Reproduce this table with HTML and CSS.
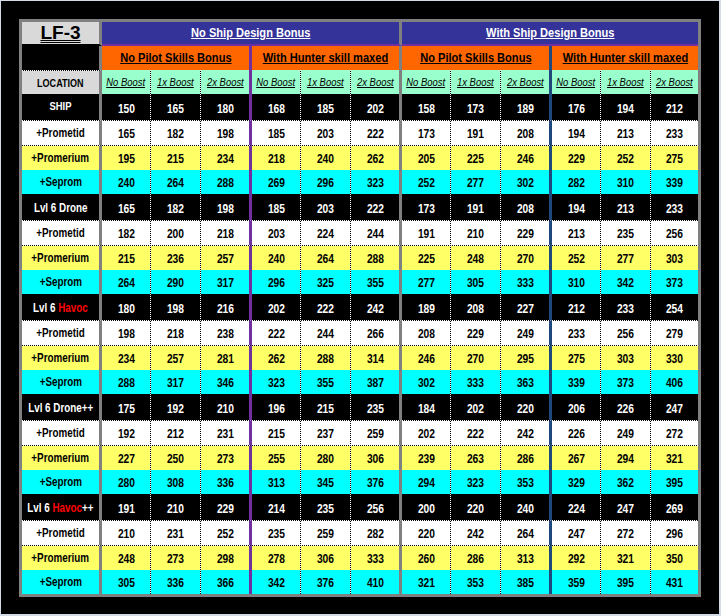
FILE: index.html
```html
<!DOCTYPE html>
<html>
<head>
<meta charset="utf-8">
<title>LF-3</title>
<link rel="stylesheet" href="styles.css">
</head>
<body>
<div class="page">
  <div class="sheet">
    <div class="lf"><span class="lf-text">LF-3</span></div>
    <div class="blue span6 div-gray"><span class="t ul">No Ship Design Bonus</span></div>
    <div class="blue span6"><span class="t ul">With Ship Design Bonus</span></div>

    <div class="corner"></div>
    <div class="orange span3 div-purple"><span class="t ul">No Pilot Skills Bonus</span></div>
    <div class="orange span3 div-gray"><span class="t ul">With Hunter skill maxed</span></div>
    <div class="orange span3 div-navy"><span class="t ul">No Pilot Skills Bonus</span></div>
    <div class="orange span3"><span class="t ul">With Hunter skill maxed</span></div>

    <div class="row boosts">
      <div><span class="t">LOCATION</span></div>
      <div><span class="t ul">No Boost</span></div><div><span class="t ul">1x Boost</span></div><div><span class="t ul">2x Boost</span></div>
      <div><span class="t ul">No Boost</span></div><div><span class="t ul">1x Boost</span></div><div><span class="t ul">2x Boost</span></div>
      <div><span class="t ul">No Boost</span></div><div><span class="t ul">1x Boost</span></div><div><span class="t ul">2x Boost</span></div>
      <div><span class="t ul">No Boost</span></div><div><span class="t ul">1x Boost</span></div><div><span class="t ul">2x Boost</span></div>
    </div>

    <div class="row k"><div class="ship"><span class="t">SHIP</span></div><div><span class="t">150</span></div><div><span class="t">165</span></div><div><span class="t">180</span></div><div><span class="t">168</span></div><div><span class="t">185</span></div><div><span class="t">202</span></div><div><span class="t">158</span></div><div><span class="t">173</span></div><div><span class="t">189</span></div><div><span class="t">176</span></div><div><span class="t">194</span></div><div><span class="t">212</span></div></div>
    <div class="row w"><div><span class="t">+Prometid</span></div><div><span class="t">165</span></div><div><span class="t">182</span></div><div><span class="t">198</span></div><div><span class="t">185</span></div><div><span class="t">203</span></div><div><span class="t">222</span></div><div><span class="t">173</span></div><div><span class="t">191</span></div><div><span class="t">208</span></div><div><span class="t">194</span></div><div><span class="t">213</span></div><div><span class="t">233</span></div></div>
    <div class="row y"><div><span class="t">+Promerium</span></div><div><span class="t">195</span></div><div><span class="t">215</span></div><div><span class="t">234</span></div><div><span class="t">218</span></div><div><span class="t">240</span></div><div><span class="t">262</span></div><div><span class="t">205</span></div><div><span class="t">225</span></div><div><span class="t">246</span></div><div><span class="t">229</span></div><div><span class="t">252</span></div><div><span class="t">275</span></div></div>
    <div class="row c"><div><span class="t">+Seprom</span></div><div><span class="t">240</span></div><div><span class="t">264</span></div><div><span class="t">288</span></div><div><span class="t">269</span></div><div><span class="t">296</span></div><div><span class="t">323</span></div><div><span class="t">252</span></div><div><span class="t">277</span></div><div><span class="t">302</span></div><div><span class="t">282</span></div><div><span class="t">310</span></div><div><span class="t">339</span></div></div>

    <div class="row k"><div><span class="t">Lvl 6 Drone</span></div><div><span class="t">165</span></div><div><span class="t">182</span></div><div><span class="t">198</span></div><div><span class="t">185</span></div><div><span class="t">203</span></div><div><span class="t">222</span></div><div><span class="t">173</span></div><div><span class="t">191</span></div><div><span class="t">208</span></div><div><span class="t">194</span></div><div><span class="t">213</span></div><div><span class="t">233</span></div></div>
    <div class="row w"><div><span class="t">+Prometid</span></div><div><span class="t">182</span></div><div><span class="t">200</span></div><div><span class="t">218</span></div><div><span class="t">203</span></div><div><span class="t">224</span></div><div><span class="t">244</span></div><div><span class="t">191</span></div><div><span class="t">210</span></div><div><span class="t">229</span></div><div><span class="t">213</span></div><div><span class="t">235</span></div><div><span class="t">256</span></div></div>
    <div class="row y"><div><span class="t">+Promerium</span></div><div><span class="t">215</span></div><div><span class="t">236</span></div><div><span class="t">257</span></div><div><span class="t">240</span></div><div><span class="t">264</span></div><div><span class="t">288</span></div><div><span class="t">225</span></div><div><span class="t">248</span></div><div><span class="t">270</span></div><div><span class="t">252</span></div><div><span class="t">277</span></div><div><span class="t">303</span></div></div>
    <div class="row c"><div><span class="t">+Seprom</span></div><div><span class="t">264</span></div><div><span class="t">290</span></div><div><span class="t">317</span></div><div><span class="t">296</span></div><div><span class="t">325</span></div><div><span class="t">355</span></div><div><span class="t">277</span></div><div><span class="t">305</span></div><div><span class="t">333</span></div><div><span class="t">310</span></div><div><span class="t">342</span></div><div><span class="t">373</span></div></div>

    <div class="row k"><div><span class="t">Lvl 6 <span class="red">Havoc</span></span></div><div><span class="t">180</span></div><div><span class="t">198</span></div><div><span class="t">216</span></div><div><span class="t">202</span></div><div><span class="t">222</span></div><div><span class="t">242</span></div><div><span class="t">189</span></div><div><span class="t">208</span></div><div><span class="t">227</span></div><div><span class="t">212</span></div><div><span class="t">233</span></div><div><span class="t">254</span></div></div>
    <div class="row w"><div><span class="t">+Prometid</span></div><div><span class="t">198</span></div><div><span class="t">218</span></div><div><span class="t">238</span></div><div><span class="t">222</span></div><div><span class="t">244</span></div><div><span class="t">266</span></div><div><span class="t">208</span></div><div><span class="t">229</span></div><div><span class="t">249</span></div><div><span class="t">233</span></div><div><span class="t">256</span></div><div><span class="t">279</span></div></div>
    <div class="row y"><div><span class="t">+Promerium</span></div><div><span class="t">234</span></div><div><span class="t">257</span></div><div><span class="t">281</span></div><div><span class="t">262</span></div><div><span class="t">288</span></div><div><span class="t">314</span></div><div><span class="t">246</span></div><div><span class="t">270</span></div><div><span class="t">295</span></div><div><span class="t">275</span></div><div><span class="t">303</span></div><div><span class="t">330</span></div></div>
    <div class="row c"><div><span class="t">+Seprom</span></div><div><span class="t">288</span></div><div><span class="t">317</span></div><div><span class="t">346</span></div><div><span class="t">323</span></div><div><span class="t">355</span></div><div><span class="t">387</span></div><div><span class="t">302</span></div><div><span class="t">333</span></div><div><span class="t">363</span></div><div><span class="t">339</span></div><div><span class="t">373</span></div><div><span class="t">406</span></div></div>

    <div class="row k"><div><span class="t">Lvl 6 Drone++</span></div><div><span class="t">175</span></div><div><span class="t">192</span></div><div><span class="t">210</span></div><div><span class="t">196</span></div><div><span class="t">215</span></div><div><span class="t">235</span></div><div><span class="t">184</span></div><div><span class="t">202</span></div><div><span class="t">220</span></div><div><span class="t">206</span></div><div><span class="t">226</span></div><div><span class="t">247</span></div></div>
    <div class="row w"><div><span class="t">+Prometid</span></div><div><span class="t">192</span></div><div><span class="t">212</span></div><div><span class="t">231</span></div><div><span class="t">215</span></div><div><span class="t">237</span></div><div><span class="t">259</span></div><div><span class="t">202</span></div><div><span class="t">222</span></div><div><span class="t">242</span></div><div><span class="t">226</span></div><div><span class="t">249</span></div><div><span class="t">272</span></div></div>
    <div class="row y"><div><span class="t">+Promerium</span></div><div><span class="t">227</span></div><div><span class="t">250</span></div><div><span class="t">273</span></div><div><span class="t">255</span></div><div><span class="t">280</span></div><div><span class="t">306</span></div><div><span class="t">239</span></div><div><span class="t">263</span></div><div><span class="t">286</span></div><div><span class="t">267</span></div><div><span class="t">294</span></div><div><span class="t">321</span></div></div>
    <div class="row c"><div><span class="t">+Seprom</span></div><div><span class="t">280</span></div><div><span class="t">308</span></div><div><span class="t">336</span></div><div><span class="t">313</span></div><div><span class="t">345</span></div><div><span class="t">376</span></div><div><span class="t">294</span></div><div><span class="t">323</span></div><div><span class="t">353</span></div><div><span class="t">329</span></div><div><span class="t">362</span></div><div><span class="t">395</span></div></div>

    <div class="row k"><div><span class="t">Lvl 6 <span class="red">Havoc</span>++</span></div><div><span class="t">191</span></div><div><span class="t">210</span></div><div><span class="t">229</span></div><div><span class="t">214</span></div><div><span class="t">235</span></div><div><span class="t">256</span></div><div><span class="t">200</span></div><div><span class="t">220</span></div><div><span class="t">240</span></div><div><span class="t">224</span></div><div><span class="t">247</span></div><div><span class="t">269</span></div></div>
    <div class="row w"><div><span class="t">+Prometid</span></div><div><span class="t">210</span></div><div><span class="t">231</span></div><div><span class="t">252</span></div><div><span class="t">235</span></div><div><span class="t">259</span></div><div><span class="t">282</span></div><div><span class="t">220</span></div><div><span class="t">242</span></div><div><span class="t">264</span></div><div><span class="t">247</span></div><div><span class="t">272</span></div><div><span class="t">296</span></div></div>
    <div class="row y"><div><span class="t">+Promerium</span></div><div><span class="t">248</span></div><div><span class="t">273</span></div><div><span class="t">298</span></div><div><span class="t">278</span></div><div><span class="t">306</span></div><div><span class="t">333</span></div><div><span class="t">260</span></div><div><span class="t">286</span></div><div><span class="t">313</span></div><div><span class="t">292</span></div><div><span class="t">321</span></div><div><span class="t">350</span></div></div>
    <div class="row c"><div><span class="t">+Seprom</span></div><div><span class="t">305</span></div><div><span class="t">336</span></div><div><span class="t">366</span></div><div><span class="t">342</span></div><div><span class="t">376</span></div><div><span class="t">410</span></div><div><span class="t">321</span></div><div><span class="t">353</span></div><div><span class="t">385</span></div><div><span class="t">359</span></div><div><span class="t">395</span></div><div><span class="t">431</span></div></div>
  </div>
</div>
</body>
</html>
```

FILE: styles.css
```css
html, body {
  margin: 0;
  padding: 0;
  background: #000;
}

.page {
  box-sizing: border-box;
  width: 721px;
  height: 616px;
  background: #000;
  border-style: solid;
  border-color: #d4dbe6;
  border-width: 1px 2px 2px 1px;
  padding: 18px 0 0 18px;
  font-family: "Liberation Sans", Arial, sans-serif;
}

.sheet {
  display: grid;
  width: max-content;
  border: 3px solid #808080;
  grid-template-columns: 80px 49px 50px 51px 49px 50px 51px 49px 50px 51px 49px 50px 47px;
  grid-template-rows: 24px 24px 24px repeat(5, 26px 26px 24px 24px);
  background-color: #fff;
  background-image: repeating-conic-gradient(#000 0% 25%, #fff 0% 50%);
  background-size: 2px 2px;
}

.sheet > div:not(.row) {
  box-sizing: border-box;
  background-clip: padding-box;
  border: 0 solid transparent;
  display: flex;
  align-items: center;
  justify-content: center;
  font-weight: bold;
  white-space: nowrap;
}

/* narrow text: Arial Narrow is Arial at ~82% width */
.t {
  display: inline-block;
  transform: scaleX(0.82);
  white-space: nowrap;
}

.span6 { grid-column: span 6; }
.span3 { grid-column: span 3; }

.div-gray { border-right: 3px solid #808080 !important; }
.div-purple { border-right: 3px solid #7030a0 !important; }
.div-navy { border-right: 3px solid #1f497d !important; }

.ul { text-decoration: underline; }

/* LF-3 title cell */
.lf {
  background-color: #d9d9d9;
  border-right: 3px solid #808080 !important;
  border-bottom: 2px solid #000 !important;
}

.lf-text {
  font-size: 19px;
  line-height: 22px;
  color: #000;
  text-decoration: underline double;
  text-decoration-thickness: 1px;
  text-underline-offset: 1px;
}

.blue {
  background-color: #333399;
  color: #fff;
  font-size: 13.5px;
  line-height: 16px;
  border-bottom: 2px solid #7030a0 !important;
}

.corner {
  background-color: #000;
  border-right: 3px solid #808080 !important;
}

.orange {
  background-color: #ff6600;
  color: #000;
  font-size: 13.5px;
  line-height: 16px;
}

/* body rows */
.row {
  display: contents;
}

.row > div {
  box-sizing: border-box;
  background-clip: padding-box;
  border: 0 solid transparent;
  display: flex;
  align-items: flex-end;
  justify-content: center;
  font-weight: bold;
  font-size: 12.5px;
  line-height: 14px;
  padding-bottom: 4px;
  white-space: nowrap;
}

.row > div:first-child {
  border-right: 3px solid #808080;
  font-size: 12px;
  padding-bottom: 5px;
}

.row > div:nth-child(3n+2),
.row > div:nth-child(3n+3) {
  border-right-width: 1px;
}

.row > div:nth-child(4) { border-right: 3px solid #7030a0; }
.row > div:nth-child(7) { border-right: 3px solid #808080; }
.row > div:nth-child(10) { border-right: 3px solid #1f497d; }

.k > div { background-color: #000; color: #fff; }
.w > div {
  background-color: #fff;
  color: #000;
  border-top-width: 1px;
  border-bottom-width: 1px;
}
.y > div { background-color: #ffff66; color: #000; }
.c > div { background-color: #00ffff; color: #000; }

.row > div.ship {
  font-size: 11.5px;
  padding-bottom: 7px;
}

.red { color: #ff0000; }

.boosts > div {
  background-color: #99ffcc;
  color: #000;
  font-weight: normal;
  font-style: italic;
  font-size: 11.5px;
  align-items: center;
  padding-bottom: 0;
}

.boosts > div:first-child {
  background-color: #d9d9d9;
  border-top-width: 1px;
  font-style: normal;
  font-weight: bold;
  font-size: 11px;
  padding-bottom: 0;
}
```
